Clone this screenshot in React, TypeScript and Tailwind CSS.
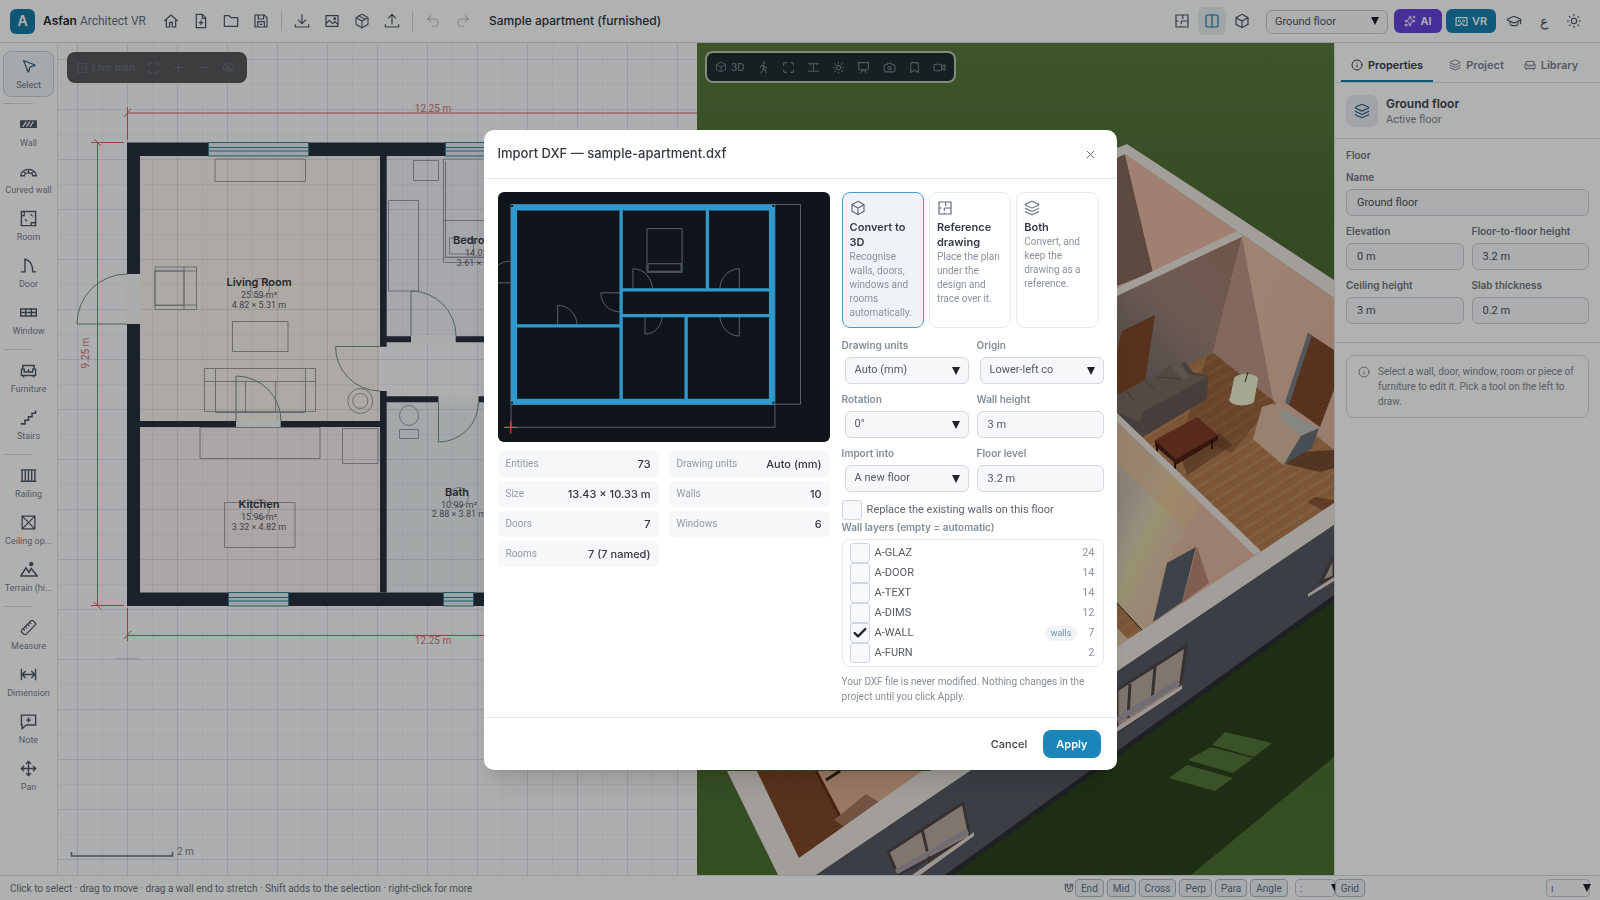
import React from "react";
import {
  Bookmark, Camera, Check, Columns2, EyeOff, GraduationCap, Info, Layers, Maximize, Minus, MousePointer2,
  Move, Package, Plus, Presentation, Redo2, Ruler, Sparkles, Sun, Undo2, Video, X,
} from "lucide-react";

type SvgProps = { size?: number; className?: string; children?: React.ReactNode };

function Glyph({ size = 16, className = "", children }: SvgProps) {
  return (
    <svg width={size} height={size} viewBox="0 0 24 24" fill="none" stroke="currentColor" strokeWidth="1.8" className={className} aria-hidden="true">
      {children}
    </svg>
  );
}

const PlanIcon = ({ size = 16 }: SvgProps) => (
  <Glyph size={size}><path d="M3 3h18v18H3zM3 12h4M11 12h10M13 3v6M11 12v4M11 19v2" /></Glyph>
);
const HomeIcon = ({ size = 16 }: SvgProps) => (
  <Glyph size={size}><path d="M2 12 12 3l10 9M5 10v11h5v-7h4v7h5V10" /></Glyph>
);
const FileIcon = ({ size = 16 }: SvgProps) => (
  <Glyph size={size}><path d="M5 2h9l5 5v15H5zM14 2v6h5M12 11v7M8.500 14.500h7" /></Glyph>
);
const FolderIcon = ({ size = 16 }: SvgProps) => (
  <Glyph size={size}><path d="M2 4h7l3 3h10v13H2z" /></Glyph>
);
const SaveIcon = ({ size = 16 }: SvgProps) => (
  <Glyph size={size}><path d="M3 3h14l4 4v14H3zM8 3v6h8V3M7 21v-8h10v8M10 17h4" /></Glyph>
);
const DownIcon = ({ size = 16 }: SvgProps) => (
  <Glyph size={size}><path d="M12 2v14M6 10l6 6 6-6M2 17v4h20v-4" /></Glyph>
);
const UpIcon = ({ size = 16 }: SvgProps) => (
  <Glyph size={size}><path d="M12 17V2M6 8l6-6 6 6M2 17v4h20v-4" /></Glyph>
);
const PictureIcon = ({ size = 16 }: SvgProps) => (
  <Glyph size={size}><path d="M3 4h18v16H3zM3 16l5-5 5 5 3-3 5 4" /><circle cx="16" cy="8.500" r="1.300" /></Glyph>
);
const WallIcon = () => (
  <Glyph size={17}><path d="M1 7h22v9H1z" fill="currentColor" /><path d="m4 15 5-7M9 15l5-7M14 15l5-7" stroke="white" strokeWidth="1.600" /></Glyph>
);
const CurvedWallIcon = () => (
  <Glyph size={17}><path d="M1 18a11 9 0 0 1 22 0h-5a6 4 0 0 0-12 0zM5 12l3 3M12 9v4M19 12l-3 3" /></Glyph>
);
const RoomIcon = () => (
  <Glyph size={17}><path d="M2 2h20v20H2z" strokeWidth="2" /><path d="M2 8h4V2M16 22v-4h6M15 6l3 3M7 13l3 3" /></Glyph>
);
const DoorIcon = () => (
  <Glyph size={17}><path d="M1 21h6V3c8 2 11 9 11 18h5M7 3v18" strokeWidth="2" /></Glyph>
);
const WindowIcon = () => (
  <Glyph size={17}><path d="M1 7h22v10H1zM1 12h22M8 7v10M16 7v10" strokeWidth="2" /></Glyph>
);
const SofaIcon = ({ size = 17 }: SvgProps) => (
  <Glyph size={size}><path d="M4 10V5h16v5M2 10h4v4h12v-4h4v9H2zM5 19v3M19 19v3M12 10v4" strokeWidth="2" /></Glyph>
);
const StairsIcon = () => (
  <Glyph size={17}><path d="M1 21h6v-5h5v-5h5V6h5V2" strokeWidth="2.200" /></Glyph>
);
const RailingIcon = () => (
  <Glyph size={17}><path d="M1 4h22M1 20h22M3 4v16M7.500 4v16M12 4v16M16.500 4v16M21 4v16" strokeWidth="2" /></Glyph>
);
const OpeningIcon = () => (
  <Glyph size={17}><path d="M3 3h18v18H3zM3 3l18 18M21 3 3 21" /></Glyph>
);
const TerrainIcon = () => (
  <Glyph size={18}><path d="m1 20 7-11 4 6 3-5 8 10z" strokeWidth="2" /><circle cx="15" cy="4" r="2" fill="currentColor" /></Glyph>
);
const DimensionIcon = () => (
  <Glyph size={17}><path d="M2 4v16M22 4v16M3 12h18M8 7l-5 5 5 5M16 7l5 5-5 5" strokeWidth="2" /></Glyph>
);
const NoteIcon = () => (
  <Glyph size={17}><path d="M2 3h20v14H9l-6 5v-5H2zM12 6.500v7M8.500 10h7" strokeWidth="2" /></Glyph>
);
const GogglesIcon = () => (
  <Glyph size={13}><path d="M2 5h20v14h-6l-4-4-4 4H2z" strokeWidth="2.200" /><circle cx="8" cy="11" r="2" /><circle cx="16" cy="11" r="2" /></Glyph>
);
const StepIcon = ({ size = 14 }: SvgProps) => (
  <Glyph size={size}><path d="M2 5h20M2 19h20M12 5v14M6 5v3M18 5v3" /></Glyph>
);
const WalkIcon = ({ size = 13 }: SvgProps) => (
  <Glyph size={size}><circle cx="13" cy="3.500" r="2" /><path d="M12 8v6l4 3 1 6M12 14l-2 4-3 5M6 13l2-4 4-1.500 3 4 4 1" strokeWidth="2" /></Glyph>
);
const MagnetIcon = () => (
  <Glyph size={10}><path d="M3 3h6v9a3 3 0 0 0 6 0V3h6v9a9 9 0 0 1-18 0zM3 7h6M15 7h6" strokeWidth="2.500" /></Glyph>
);
const CubeIcon = ({ size = 16 }: SvgProps) => (
  <Glyph size={size}><path d="m12 2 9 5v10l-9 5-9-5V7zM3 7l9 5 9-5M12 12v10" /></Glyph>
);

function Caret({ className = "" }: { className?: string }) {
  return (
    <svg viewBox="0 0 8 8" width="8" height="8" className={`pointer-events-none absolute top-1/2 -translate-y-1/2 ${className}`} aria-hidden="true">
      <path d="M0 0h8L4 8z" fill="#1f2226" />
    </svg>
  );
}

const tools: { name: string; icon: React.ReactNode; divider?: boolean }[] = [
  { name: "Select", icon: <MousePointer2 size={16} strokeWidth={1.8} />, divider: true },
  { name: "Wall", icon: <WallIcon /> },
  { name: "Curved wall", icon: <CurvedWallIcon /> },
  { name: "Room", icon: <RoomIcon /> },
  { name: "Door", icon: <DoorIcon /> },
  { name: "Window", icon: <WindowIcon />, divider: true },
  { name: "Furniture", icon: <SofaIcon /> },
  { name: "Stairs", icon: <StairsIcon />, divider: true },
  { name: "Railing", icon: <RailingIcon /> },
  { name: "Ceiling op...", icon: <OpeningIcon /> },
  { name: "Terrain (hi...", icon: <TerrainIcon />, divider: true },
  { name: "Measure", icon: <Ruler size={17} strokeWidth={1.8} className="-scale-x-100" /> },
  { name: "Dimension", icon: <DimensionIcon /> },
  { name: "Note", icon: <NoteIcon /> },
  { name: "Pan", icon: <Move size={17} strokeWidth={2} /> },
];

function IconButton({ label, children, className = "" }: { label: string; children: React.ReactNode; className?: string }) {
  return (
    <button type="button" aria-label={label} className={`flex h-7 w-7 items-center justify-center rounded-md ${className}`}>
      {children}
    </button>
  );
}

function Header() {
  return (
    <header className="flex h-[43px] shrink-0 items-center border-b border-[#d5dade] bg-[#fdfefe] pr-3 pl-[10px] text-[#4b5663]">
      <div className="flex h-[25px] w-[25px] items-center justify-center rounded-md bg-[#167ba6] font-['Inter',sans-serif] text-sm font-semibold text-white">A</div>
      <div className="ml-2 w-[103px] text-xs whitespace-nowrap text-[#657080]">
        <span className="font-['Inter',sans-serif] font-semibold text-[#262d36]">Asfan</span> Architect VR
      </div>
      <div className="ml-[11px] flex gap-[2px]">
        <IconButton label="Home"><HomeIcon /></IconButton>
        <IconButton label="New project"><FileIcon /></IconButton>
        <IconButton label="Open"><FolderIcon /></IconButton>
        <IconButton label="Save"><SaveIcon /></IconButton>
      </div>
      <div className="mx-[6px] h-5 w-px bg-[#cfd4d8]" />
      <div className="flex gap-[2px]">
        <IconButton label="Import"><DownIcon /></IconButton>
        <IconButton label="Import image"><PictureIcon /></IconButton>
        <IconButton label="Import model"><Package size={16} strokeWidth={1.6} /></IconButton>
        <IconButton label="Export"><UpIcon /></IconButton>
      </div>
      <div className="mx-[6px] h-5 w-px bg-[#cfd4d8]" />
      <div className="flex gap-[2px] text-[#c0c5ca]">
        <IconButton label="Undo"><Undo2 size={16} strokeWidth={1.6} /></IconButton>
        <IconButton label="Redo"><Redo2 size={16} strokeWidth={1.6} /></IconButton>
      </div>
      <h1 className="ml-3 font-['Inter',sans-serif] text-xs font-medium whitespace-nowrap text-[#2c333b]">Sample apartment (furnished)</h1>
      <div className="ml-auto flex items-center">
        <div className="flex gap-[2px]">
          <IconButton label="Plan view"><PlanIcon /></IconButton>
          <IconButton label="Split view" className="bg-[#e6ecf1] text-[#167ba6]"><Columns2 size={16} strokeWidth={1.8} /></IconButton>
          <IconButton label="3D view"><CubeIcon /></IconButton>
        </div>
        <div className="relative ml-[10px]">
          <select aria-label="Floor" className="h-6 w-[122px] appearance-none rounded-md border border-[#c5ccd3] bg-[#f7f9fb] pl-2 text-[11px] text-[#4b5663]">
            <option>Ground floor</option>
          </select>
          <Caret className="right-[9px]" />
        </div>
        <button type="button" className="ml-[6px] flex h-6 w-12 items-center justify-center gap-1 rounded-md bg-[#6445dd] font-['Inter',sans-serif] text-[11px] font-semibold text-white"><Sparkles size={12} />AI</button>
        <button type="button" className="ml-1 flex h-6 w-[50px] items-center justify-center gap-1 rounded-md bg-[#1782b0] font-['Inter',sans-serif] text-[11px] font-semibold text-white"><GogglesIcon />VR</button>
        <div className="ml-1 flex gap-[2px]">
          <IconButton label="Learn"><GraduationCap size={16} strokeWidth={1.7} /></IconButton>
          <IconButton label="Language"><span className="text-sm">ع</span></IconButton>
          <IconButton label="Theme"><Sun size={16} strokeWidth={1.6} /></IconButton>
        </div>
      </div>
    </header>
  );
}

function Toolbar() {
  return (
    <nav className="flex w-[58px] shrink-0 flex-col gap-px border-r border-[#e1e5e8] bg-[#fcfdfd] px-[3px] pt-2">
      {tools.map((t, i) => (
        <React.Fragment key={t.name}>
          <button
            type="button"
            className={`flex h-[46px] shrink-0 flex-col items-center justify-between rounded-lg border pt-[6px] pb-[5px] text-[9px] leading-3 whitespace-nowrap ${
              i === 0 ? "border-[#c3d0dc] bg-[#edf2f6] text-[#2b5673]" : "border-transparent text-[#4d5866]"
            }`}
          >
            {t.icon}
            <span className={i === 0 ? "text-[#5c7385]" : "text-[#78818d]"}>{t.name}</span>
          </button>
          {t.divider && <div className="mt-[5px] mb-1 h-px w-[30px] shrink-0 bg-[#d5d9dd]" />}
        </React.Fragment>
      ))}
    </nav>
  );
}

function Win({ x, y, w }: { x: number; y: number; w: number }) {
  return (
    <g stroke="#3b7f97" strokeWidth="1">
      <rect x={x} y={y} width={w} height="13.500" fill="#dfeaf0" />
      <path d={`M${x} ${y + 5}h${w}M${x} ${y + 8.5}h${w}`} />
    </g>
  );
}

function PlanView() {
  const majors = Array.from({ length: 18 }, (_, i) => i);
  return (
    <section className="relative min-w-0 flex-[639] overflow-hidden bg-[#f8fafb]" aria-label="Floor plan">
      <svg viewBox="58 43 639 832" preserveAspectRatio="xMinYMin slice" className="block h-full w-full" fontFamily="Roboto, sans-serif">
        <path d="M140 155h240v266H140z" fill="#f8f2ed" />
        <path d="M140 427h240v165H140z" fill="#f6eeee" />
        <path d="M387 155h310v181H387z" fill="#eff1f6" />
        <path d="M387 402h310v190H387z" fill="#ecf1f3" />
        {majors.map((i) => (
          <g key={i}>
            <path d={`M${77.5 + i * 50} 43v832M58 ${59.5 + i * 50}h639`} stroke="#8b9bab" strokeOpacity=".26" />
            <path d={`M${102.5 + i * 50} 43v832M58 ${84.5 + i * 50}h639`} stroke="#8b9bab" strokeOpacity=".1" />
          </g>
        ))}
        <g fill="#28323f">
          <path d="M127 142.500h570V156H140v436.500h557V606H127z" />
          <path d="M380 156h6.700v180.300H697v6H386.700v4.400H380zM380 391h6.700v5.300H697v6H386.700v190.200H380z" />
          <path d="M140 421h240v6H140z" />
        </g>
        <path d="M126 274h14.500v50H126zM236 420h44.700v8H236zM411 335h44.700v8.500H411zM438.500 395h40v8.500h-40z" fill="#f4f5f5" />
        <Win x={208.500} y={142.500} w={100} />
        <Win x={445.500} y={142.500} w={100} />
        <Win x={228.500} y={592.500} w={60} />
        <Win x={443.500} y={592.500} w={30} />
        <g fill="none" stroke="#5f8577" strokeWidth=".9">
          <path d="M127 274a50 50 0 0 0-50 50h50M236 421v-45a45 45 0 0 1 45 45M380 346.500h-44.500a44.500 44.500 0 0 0 44.500 44.500M411 336v-45a45 45 0 0 1 45 45M438.500 402v40a40 40 0 0 0 40-40" />
        </g>
        <g fill="none" stroke="#8d949c" strokeWidth=".9">
          <path d="M215 159h90.500v22.500H215zM155 267h41.500v42.500H155zM155 271h29v34.500h-29zM184 267v42M155 271h41M155 305h41M232.500 321.500H288v30h-55.500z" />
          <path d="M204.500 368.500h111v43h-111zM215.500 368.500v43M305.500 368.500v43M204.500 381.500h111M215.500 381.500v31h90M245.500 381.500v31M275.500 381.500v31" />
          <circle cx="360.300" cy="401" r="12.500" /><circle cx="360.300" cy="401" r="7.500" />
          <path d="M200 427.500h120v31H200zM342.500 428.500H378v35h-35.500zM224.500 502.500H295v45h-70.500z" />
          <ellipse cx="409" cy="415.500" rx="9.500" ry="10" /><path d="M399.500 429.500h19v9h-19z" />
          <path d="M413.500 160.500h25v20h-25zM388.500 200.500h30V291h-30zM443.500 159h60v103.500h-60zM445.500 161v96h60M443.500 220.500h60M449.500 238h24v16h-24zM443.500 257.500h60" />
          <circle cx="260" cy="288" r="9.500" /><circle cx="260" cy="509" r="9.500" /><circle cx="459" cy="497" r="9.500" />
        </g>
        <g stroke="#d2605f" fill="none">
          <path d="M127.500 113H697M127.500 107v33M124 117l7-8M97.500 142v463M91 142.500h33M94 139l7 7M91 605.500h33M94 602l7 7M127.500 608v33M127.500 635.500H697M124 639l7-8" />
        </g>
        <g fill="#cf7573" fontSize="10" textAnchor="middle">
          <text x="433" y="112">12.25 m</text>
          <text x="433" y="644">12.25 m</text>
          <text transform="translate(89 353) rotate(-90)">9.25 m</text>
        </g>
        <g textAnchor="middle" fill="#5c6168" fontSize="9">
          <g fontFamily="Inter, sans-serif" fontSize="11" fontWeight="600" fill="#353b42">
            <text x="259" y="286">Living Room</text>
            <text x="259" y="508">Kitchen</text>
            <text x="457" y="496">Bath</text>
            <text x="477" y="244">Bedroom</text>
          </g>
          <text x="259" y="298">25.59 m²</text><text x="259" y="308">4.82 × 5.31 m</text>
          <text x="259" y="520">15.96 m²</text><text x="259" y="530">3.32 × 4.82 m</text>
          <text x="459" y="508">10.99 m²</text><text x="459" y="517">2.88 × 3.81 m</text>
          <text x="483" y="256">14.05 m²</text><text x="484" y="266">3.61 × 3.88 m</text>
        </g>
        <path d="M71.500 852v4h101v-4" fill="none" stroke="#66717f" strokeWidth="1.600" />
        <text x="177" y="855" fontSize="10" fill="#7b838c">2 m</text>
        <path d="M115 658.500h24" stroke="#d4d9dd" />
      </svg>
      <div className="absolute top-[9px] left-[9px] flex h-[31px] w-[180px] items-center gap-3 rounded-lg bg-[#565859] pr-2 pl-[9px] text-[#68727b]">
        <span className="flex items-center gap-1 font-['Inter',sans-serif] text-[10px] font-semibold whitespace-nowrap"><PlanIcon size={12} />Live plan</span>
        <Maximize size={13} /><Plus size={13} /><Minus size={13} /><EyeOff size={13} />
      </div>
    </section>
  );
}

function House3D() {
  return (
    <svg viewBox="697 43 637 832" preserveAspectRatio="xMidYMid slice" className="block h-full w-full" aria-hidden="true">
      <defs>
        <linearGradient id="grass" x1="0" y1="0" x2="0" y2="1"><stop offset="0" stopColor="#5a7a3e" /><stop offset=".25" stopColor="#4a6a32" /><stop offset="1" stopColor="#4c7032" /></linearGradient>
        <linearGradient id="peach" x1="0" y1="0" x2="1" y2="1"><stop offset="0" stopColor="#f4c8af" /><stop offset="1" stopColor="#d3ab96" /></linearGradient>
        <linearGradient id="shade" x1="1" y1="0" x2=".3" y2="1"><stop offset="0" stopColor="#9d796b" /><stop offset=".5" stopColor="#a08376" /><stop offset="1" stopColor="#736d6c" /></linearGradient>
        <linearGradient id="glow" gradientUnits="userSpaceOnUse" x1="1116" y1="520" x2="1200" y2="560"><stop offset="0" stopColor="#c9bcac" /><stop offset=".25" stopColor="#d6cdb4" /><stop offset=".4" stopColor="#dad29f" /><stop offset=".55" stopColor="#dcc6a8" /><stop offset="1" stopColor="#e0bba0" /></linearGradient>
        <linearGradient id="night" x1="0" y1="0" x2="1" y2="1"><stop offset="0" stopColor="#2b3e1c" /><stop offset="1" stopColor="#2c4520" /></linearGradient>
        <pattern id="planks" width="26" height="10" patternUnits="userSpaceOnUse" patternTransform="rotate(-32)"><path d="M0 0h26v10H0z" fill="#b98458" /><path d="M0 0h26v5H0z" fill="#b37c50" /><path d="M0 .5h26M0 5.500h26M8 0v5M19 5v5" stroke="#a06d45" strokeWidth=".5" /></pattern>
        <pattern id="dark" width="18" height="9" patternUnits="userSpaceOnUse" patternTransform="rotate(-18)"><path d="M0 0h18v9H0z" fill="#80492a" /><path d="M0 .5h18M0 5h18" stroke="#733f22" strokeWidth=".7" /></pattern>
      </defs>
      <path d="M697 43h637v832H697z" fill="url(#grass)" />
      {/* ground shadow and sun patches */}
      <path d="M940 875 1334 590v167L1191 875z" fill="url(#night)" />
      <g fill="#54763a"><path d="m1225 732 47 11-18 14-42-12zM1211 747l42 11-20 15-45-13zM1187 765l46 13-18 13-46-13z" /></g>
      {/* back rooms */}
      <path d="M1100 155 1125 154 1334 298v220L1116 660z" fill="url(#peach)" />
      <path d="m1117 157 8-3 28 118-36 14z" fill="#86695c" />
      <path d="m1125 154 112 78-84 40z" fill="#e6b9a2" />
      <path d="m1117 294 125-57-29 116-96 48z" fill="url(#shade)" />
      <path d="m1242 237 31 163-60-47z" fill="#bd9686" />
      <path d="m1213 353 61 48 60 49v75l-74 27-143-135v-20z" fill="url(#planks)" />
      <path d="m1122 331 33-16-10 67-28 13v-45zM1308 333l26 17v40l-14 37-34-24z" fill="url(#dark)" />
      <path d="m1308 333 4 2-23 70-4-3z" fill="#797d84" />
      <path d="m1207 356 7-3 60 48-42 52-49-20z" fill="#5d3019" opacity=".3" />
      <path d="m1307 502 8-5 19 3v11l-10 0z" fill="#5d3019" opacity=".5" />
      {/* sofa */}
      <path d="m1117 396 53-30 15-4 8 10 15 4-1 23-64 38-26-20z" fill="#675b57" />
      <path d="m1117 396 53-30 17 7 21 4-64 34-5 11-22-10z" fill="#786a64" />
      <path d="m1127 392 7 8M1146 381l8 8M1158 377l23 2" stroke="#5c504c" fill="none" />
      <path d="m1171 367 9-5 10 15-8 2z" fill="#87776d" />
      {/* coffee table */}
      <path d="m1180 455 40-22 12 12-45 30z" fill="#55301b" opacity=".45" />
      <path d="m1155 440 42-23 21 18-42 24z" fill="#7d3d28" /><path d="m1155 440 21 19v5l-21-18zM1176 459l42-24v5l-42 25z" fill="#4c2116" />
      <path d="M1157 445v9M1175 462v9M1212 440v9" stroke="#34170e" strokeWidth="2" />
      {/* lamp */}
      <path d="M1234 379a12 5 0 0 1 24 0l-4 23a12 5 0 0 1-24-4z" fill="#eef0cf" /><path d="m1248 372-3 10" stroke="#30332c" />
      {/* armchair */}
      <path d="m1300 452 34-2v18l-14 4-34-8z" fill="#4b2d1d" opacity=".6" />
      <path d="m1262 407 22-5 16 34 0 2-17 27-30-26z" fill="#dabba0" /><path d="m1262 407 10-3 30 28-18 33-30-26z" fill="#dabba0" /><path d="m1281 409 38 19-18 8-20-17z" fill="#c1c0bb" /><path d="m1301 436 18-8-7 20-28 16z" fill="#66727a" />
      {/* near room */}
      <path d="M1117 422 1254 555 1116 655z" fill="url(#glow)" />
      <path d="m1117 424 84 82-16 24-68-66z" fill="#e8bd90" opacity=".55" />
      <path d="M1167 563 1201 504 1254 555 1182 605z" fill="#e0b8a0" />
      <path d="m1197 547 12 36-27 20z" fill="#b68773" />
      <path d="m1167 563 29-16-14 55-29 20z" fill="#596069" />
      <path d="m1116 602 26 28-14 9-12-12z" fill="url(#planks)" /><path d="m1116 602 26 28" stroke="#261f1a" />
      {/* wall tops */}
      <g fill="#e9e4de">
        <path d="m1117 148 10-4 207 136v18L1125 154l-8 4zM1117 288l120-57 6 5-126 60zM1117 413v8l137 134 7-4z" />
        <path d="M1334 503v22L816 875h-38L727 771h30l42 87z" />
      </g>
      <path d="M757 771h213L799 858z" fill="#dcae90" />
      <path d="M757 771h59l30 57-47 30z" fill="url(#dark)" /><path d="m816 771 30 57" stroke="#633117" strokeWidth="3" />
      <path d="m834 820 32-26 16 10-36 24z" fill="#a5785f" /><path d="m826 780 14-9" stroke="#302620" strokeWidth="3" />
      <path d="M922 771h48L816 875l-17-17z" fill="#e9e4de" />
      {/* façade */}
      <path d="M1334 525v70L945 875H816z" fill="#555a62" /><path d="m945 875 389-280v6L953 875z" fill="#2b2e33" />
      <g stroke="#4d4746" strokeWidth="3" fill="#b9a99e">
        <path d="m1117 690 69-44-6 42-63 44z" /><path d="m1130 684-2 34M1155 667l-3 34" />
        <path d="m888 852 75-49 7 34-72 38z" /><path d="m922 829 8 34" />
        <path d="m1334 556-13 26 13-5z" />
      </g>
      <path d="m1117 727 65-42v4l-65 43zM912 875l62-43v4l-54 39zM1308 594l26-17v4l-26 16z" fill="#e1d6cf" />
      <path d="m1117 720 62-38M896 872l72-41" stroke="#a39ca8" strokeWidth="5" />
    </svg>
  );
}

function ThreeView() {
  return (
    <section className="relative min-w-0 flex-[637] overflow-hidden" aria-label="3D view">
      <House3D />
      <div className="absolute top-2 left-2 flex h-8 w-[251px] items-center justify-between rounded-lg border-2 border-[#b9c9b5] bg-[#1e2e30] px-2 text-[#78838c]">
        <span className="flex items-center gap-1 font-['Inter',sans-serif] text-[10px] font-medium"><CubeIcon size={12} />3D</span>
        <WalkIcon /><Maximize size={13} /><StepIcon size={13} /><Sun size={13} /><Presentation size={13} /><Camera size={13} /><Bookmark size={13} /><Video size={13} />
      </div>
    </section>
  );
}

function PanelField({ id, label, value }: { id: string; label: string; value: string }) {
  return (
    <div className="flex min-w-0 flex-col gap-1">
      <label htmlFor={id} className="font-['Inter',sans-serif] text-[10px] leading-[15px] font-semibold whitespace-nowrap text-[#6f7781]">{label}</label>
      <input id={id} defaultValue={value} className="h-[27px] w-full rounded-md border border-[#cbd0d6] bg-[#f7f8fb] px-[10px] text-[11px] text-[#4b525a]" />
    </div>
  );
}

function Properties() {
  return (
    <aside className="w-[266px] shrink-0 border-l border-[#dfe3e6] bg-[#fdfefe]">
      <div className="flex h-10 items-stretch gap-4 border-b border-[#dde1e4] pl-[6px] font-['Inter',sans-serif] text-[11px] font-semibold whitespace-nowrap text-[#7a838d]">
        <button type="button" className="flex items-center gap-[5px] border-b-2 border-[#167ba6] px-[10px] pt-[7px] text-[#343c45]"><Info size={12} />Properties</button>
        <button type="button" className="flex items-center gap-[5px] pt-[5px]"><Layers size={12} />Project</button>
        <button type="button" className="ml-1 flex items-center gap-[5px] pt-[5px]"><SofaIcon size={12} />Library</button>
      </div>
      <div className="flex h-[56px] items-center gap-2 border-b border-[#dde1e4] px-[11px]">
        <div className="flex h-8 w-8 items-center justify-center rounded-lg bg-[#e7edf3] text-[#2b6080]"><Layers size={16} strokeWidth={1.7} /></div>
        <div>
          <h2 className="font-['Inter',sans-serif] text-xs leading-[17px] font-semibold text-[#3b424a]">Ground floor</h2>
          <p className="text-[11px] leading-[15px] text-[#7d858e]">Active floor</p>
        </div>
      </div>
      <div className="border-b border-[#dde1e4] px-[11px] pt-[9px] pb-[18px]">
        <h3 className="mb-[7px] font-['Inter',sans-serif] text-[10px] leading-[15px] font-semibold text-[#6f7781]">Floor</h3>
        <PanelField id="floor-name" label="Name" value="Ground floor" />
        <div className="mt-2 grid grid-cols-2 gap-2">
          <PanelField id="elevation" label="Elevation" value="0 m" />
          <PanelField id="f2f" label="Floor-to-floor height" value="3.2 m" />
          <PanelField id="ceiling" label="Ceiling height" value="3 m" />
          <PanelField id="slab" label="Slab thickness" value="0.2 m" />
        </div>
      </div>
      <div className="mx-[11px] mt-3 flex gap-2 rounded-lg border border-[#d7dbdf] py-2 pr-2 pl-[11px] text-[10px] leading-[15px] text-[#808892]">
        <Info size={12} className="mt-[2px] shrink-0" />
        <p>Select a wall, door, window, room or piece of furniture to edit it. Pick a tool on the left to draw.</p>
      </div>
    </aside>
  );
}

function StatusBar() {
  const snap = "h-[18px] rounded border border-[#a9bac6] bg-[#edf2f6] px-[5px] text-[10px] text-[#5d7386]";
  return (
    <footer className="flex h-[25px] shrink-0 items-center border-t border-[#d9dde0] bg-[#fbfdfd] pr-[10px] pl-[10px] text-[10px] text-[#69727c]">
      <p className="whitespace-nowrap">Click to select · drag to move · drag a wall end to stretch · Shift adds to the selection · right-click for more</p>
      <div className="ml-auto flex items-center gap-[3px]">
        <span className="-mr-[2px]"><MagnetIcon /></span>
        {["End", "Mid", "Cross", "Perp", "Para", "Angle"].map((s) => (
          <button key={s} type="button" className={snap}>{s}</button>
        ))}
        <div className="relative ml-1">
          <select aria-label="Snap step" className="block h-[18px] w-10 appearance-none rounded border border-[#c5ccd3] bg-[#f7f9fb] pl-1"><option>:</option></select>
          <Caret className="-right-1" />
        </div>
        <button type="button" className={`z-10 -ml-[3px] ${snap}`}>Grid</button>
      </div>
      <div className="relative ml-[181px]">
        <select aria-label="Units" className="block h-[18px] w-11 appearance-none rounded border border-[#c5ccd3] bg-[#f7f9fb] pl-1"><option>ı</option></select>
        <Caret className="-right-px" />
      </div>
    </footer>
  );
}

function Preview() {
  return (
    <svg viewBox="498 192 331 249" className="block w-full rounded-md bg-[#10151b]" role="img" aria-label="Drawing preview">
      <g fill="none" stroke="#626974" strokeWidth=".9">
        <path d="M511 204.500h288.500v199H511zM511 204.500h263v222H511z" />
        <path d="M646.500 228.500h35V272h-35zM647.500 263.500h33V271h-33z" />
        <path d="M498 265q5-4 13-4M498 282.500h13M632.500 289v-20.500c11 0 19 9 19.500 20.500M738.500 289v-20.500c-11 0-19 9-19.500 20.500M619.500 292.500H600.500a19 19 0 0 0 19 19M557.500 325v-20c11 0 19 9 19.500 20M644.500 315v18.500c10 0 17-8 17-18.500M738.500 315v20.500c-11 0-19-9-19.500-20.500" />
      </g>
      <path d="M514 207.500h257v193.500H514z" fill="none" stroke="#2f98cc" strokeWidth="6" />
      <path d="M620.700 210v189M516 325.500h105M706.700 210v79M622 289.500h147M622 315.200h147M685.500 315v84" stroke="#2f98cc" strokeWidth="3.300" fill="none" />
      <path d="M511 205h2v2h-2zM771.500 205h2v2h-2zM511 401h2v2h-2zM771.500 401h2v2h-2z" fill="#10151b" />
      <path d="M504 426.500h13M510.700 420v13" stroke="#e24a4a" strokeWidth="1.200" />
    </svg>
  );
}

const stats: [string, string][] = [
  ["Entities", "73"], ["Drawing units", "Auto (mm)"], ["Size", "13.43 × 10.33 m"], ["Walls", "10"],
  ["Doors", "7"], ["Windows", "6"], ["Rooms", "7 (7 named)"],
];

const modes = [
  { title: "Convert to 3D", text: "Recognise walls, doors, windows and rooms automatically.", icon: <CubeIcon />, active: true },
  { title: "Reference drawing", text: "Place the plan under the design and trace over it.", icon: <PlanIcon /> },
  { title: "Both", text: "Convert, and keep the drawing as a reference.", icon: <Layers size={16} strokeWidth={1.6} /> },
];

const fields: { id: string; label: string; value: string; select?: boolean }[] = [
  { id: "units", label: "Drawing units", value: "Auto (mm)", select: true },
  { id: "origin", label: "Origin", value: "Lower-left corner", select: true },
  { id: "rotation", label: "Rotation", value: "0°", select: true },
  { id: "wall-height", label: "Wall height", value: "3 m" },
  { id: "into", label: "Import into", value: "A new floor", select: true },
  { id: "level", label: "Floor level", value: "3.2 m" },
];

const layers: { name: string; count: number; walls?: boolean }[] = [
  { name: "A-GLAZ", count: 24 }, { name: "A-DOOR", count: 14 }, { name: "A-TEXT", count: 14 },
  { name: "A-DIMS", count: 12 }, { name: "A-WALL", count: 7, walls: true }, { name: "A-FURN", count: 2 },
];

function Tick({ id, checked }: { id: string; checked?: boolean }) {
  return (
    <span className="relative block h-5 w-5 shrink-0">
      <input id={id} type="checkbox" defaultChecked={checked} className="peer block h-5 w-5 appearance-none rounded-[3px] border border-[#cfd6de] bg-[#f6f8fa]" />
      <Check size={16} strokeWidth={3.5} className="pointer-events-none absolute top-[2px] left-[2px] hidden text-[#1d2126] peer-checked:block" />
    </span>
  );
}

function ImportDialog() {
  const box = "h-[27px] rounded-md border border-[#d3d8de] bg-[#f5f7f9] text-[11px] text-[#545b63]";
  const caption = "font-['Inter',sans-serif] text-[10px] leading-[15px] font-semibold text-[#838d98]";
  return (
    <div role="dialog" aria-modal="true" aria-labelledby="dlg-title" className="w-[633px] max-w-full overflow-hidden rounded-[10px] bg-white shadow-xl">
      <div className="flex h-[49px] items-center justify-between border-b border-[#e8ebef] px-[14px]">
        <h2 id="dlg-title" className="font-['Inter',sans-serif] text-[13px] font-medium text-[#343a41]">Import DXF — sample-apartment.dxf</h2>
        <button type="button" aria-label="Close" className="flex h-6 w-6 items-center justify-center text-[#626a74]"><X size={13} strokeWidth={1.8} /></button>
      </div>
      <div className="grid grid-cols-[331fr_261fr] items-start gap-3 pt-[13px] pr-[13px] pb-[13px] pl-[14px]">
        <div>
          <Preview />
          <dl className="mt-[9px] grid grid-cols-2 gap-x-[10px] gap-y-1">
            {stats.map(([k, v]) => (
              <div key={k} className="flex h-[26px] items-center justify-between rounded-md bg-[#f6f7f9] px-2">
                <dt className="text-[10px] text-[#929aa4]">{k}</dt>
                <dd className="font-['Inter',sans-serif] text-[11px] font-medium text-[#31363c]">{v}</dd>
              </div>
            ))}
          </dl>
        </div>
        <div>
          <div className="mr-[5px] grid grid-cols-3 gap-[5px]">
            {modes.map((m) => (
              <button key={m.title} type="button" aria-pressed={!!m.active} className={`flex flex-col items-start rounded-lg border p-[7px] text-left ${m.active ? "border-[#4a9cc5] bg-[#eff3f7]" : "border-[#e5e8ec] bg-white"}`}>
                <span className="mb-1 text-[#626c78]">{m.icon}</span>
                <span className="font-['Inter',sans-serif] text-[11px] leading-[15px] font-semibold text-[#343a41]">{m.title}</span>
                <span className="text-[10px] leading-[14px] text-[#8a929c]">{m.text}</span>
              </button>
            ))}
          </div>
          <div className="mt-[10px] grid grid-cols-2 gap-2">
            {fields.map((f) => (
              <div key={f.id} className="flex min-w-0 flex-col gap-1">
                <label htmlFor={f.id} className={caption}>{f.label}</label>
                {f.select ? (
                  <div className="relative ml-[3px]">
                    <select id={f.id} className={`block w-full appearance-none overflow-hidden pr-[50px] pl-[9px] ${box}`}><option>{f.value}</option></select>
                    <Caret className="right-[9px]" />
                  </div>
                ) : (
                  <input id={f.id} defaultValue={f.value} className={`w-full px-[10px] ${box}`} />
                )}
              </div>
            ))}
          </div>
          <div className="mt-2 flex items-center gap-[5px]">
            <Tick id="replace" />
            <label htmlFor="replace" className="text-[11px] text-[#5e656e]">Replace the existing walls on this floor</label>
          </div>
          <h3 className={`mb-1 ${caption}`}>Wall layers (empty = automatic)</h3>
          <ul className="rounded-lg border border-[#e5e8ec] py-[3px] pr-2 pl-[7px]">
            {layers.map((l) => (
              <li key={l.name} className="flex h-5 items-center gap-[5px] text-[11px] text-[#545b63]">
                <Tick id={l.name} checked={l.walls} />
                <label htmlFor={l.name} className="flex-1">{l.name}</label>
                {l.walls && <span className="mr-[6px] rounded-full bg-[#eff3f6] px-[6px] text-[9px] leading-[15px] text-[#6c93ad]">walls</span>}
                <span className="text-[#8b929b]">{l.count}</span>
              </li>
            ))}
          </ul>
          <p className="mt-[7px] text-[10px] leading-[15px] text-[#858d97]">Your DXF file is never modified. Nothing changes in the project until you click Apply.</p>
        </div>
      </div>
      <div className="flex h-[53px] items-center justify-end gap-4 border-t border-[#e8ebef] px-4 font-['Inter',sans-serif] text-[11px]">
        <button type="button" className="font-medium text-[#3a4149]">Cancel</button>
        <button type="button" className="h-7 rounded-lg bg-[#1985b8] px-[13px] font-semibold text-white">Apply</button>
      </div>
    </div>
  );
}

export default function App() {
  return (
    <div className="relative flex h-screen flex-col overflow-hidden bg-white font-[Roboto,sans-serif]">
      <Header />
      <div className="flex min-h-0 flex-1">
        <Toolbar />
        <PlanView />
        <ThreeView />
        <Properties />
      </div>
      <StatusBar />
      <div className="fixed inset-0 z-20 flex items-center justify-center bg-black/30">
        <ImportDialog />
      </div>
    </div>
  );
}
